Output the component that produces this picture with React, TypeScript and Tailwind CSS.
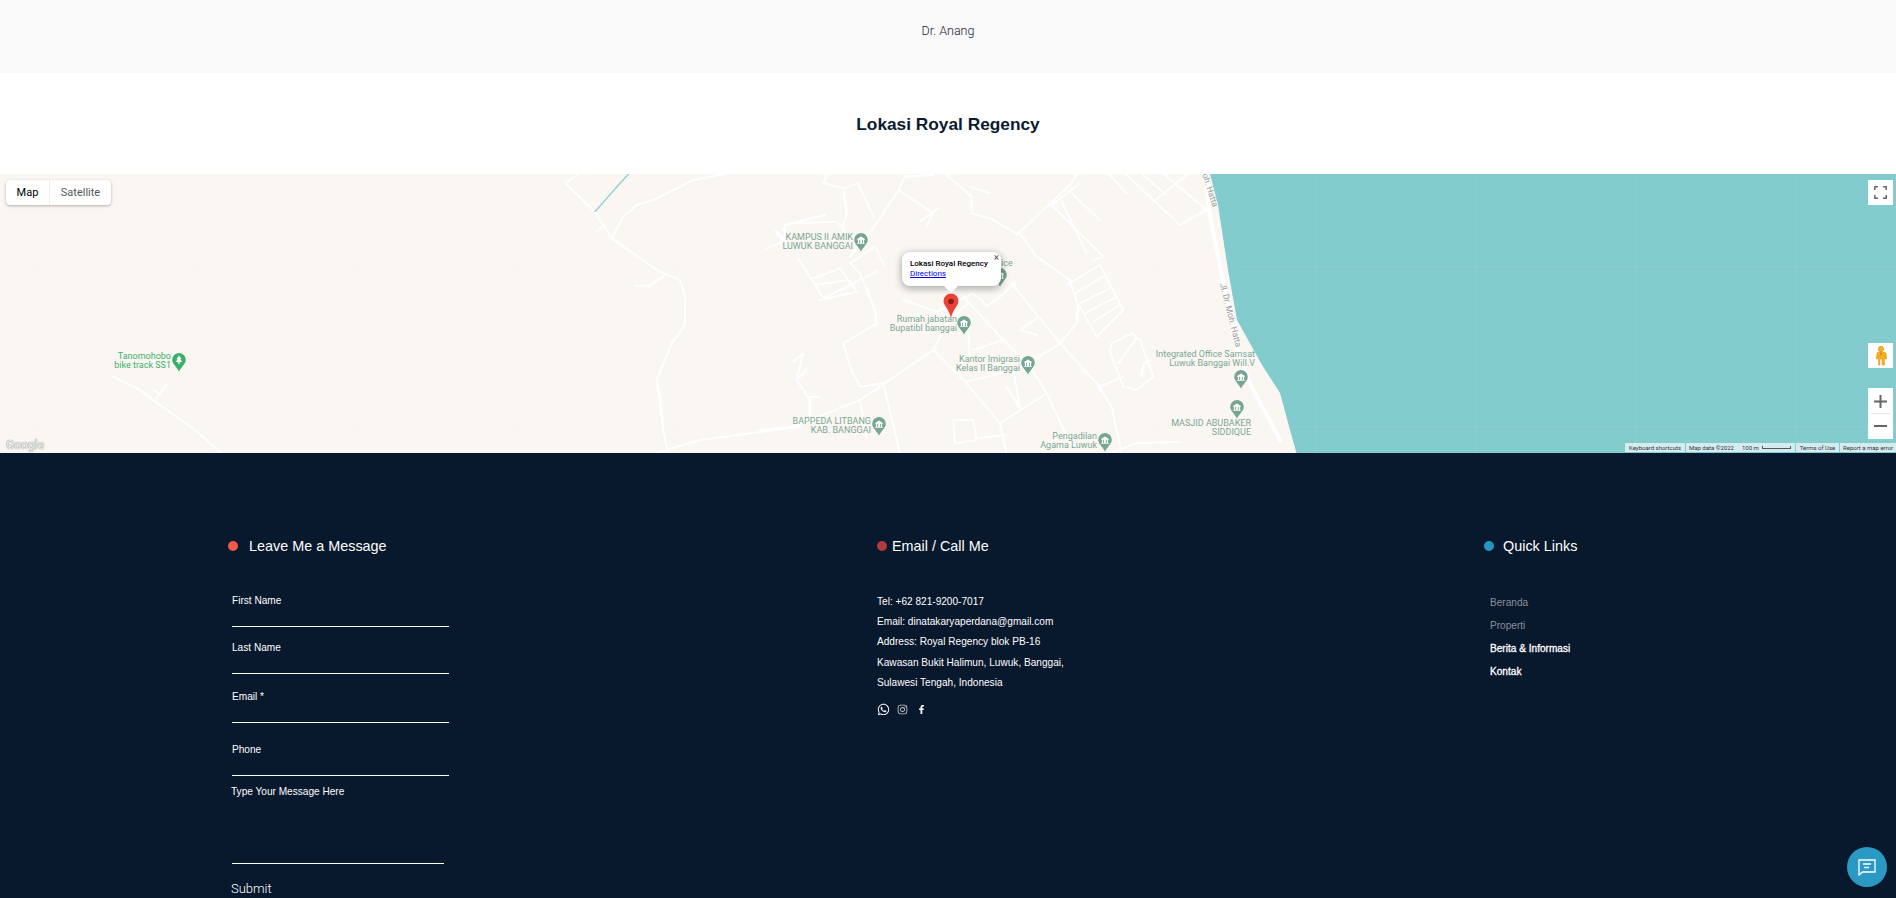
import React from 'react';
import { FaWhatsapp, FaInstagram, FaFacebookF } from 'react-icons/fa';

// road traces, in 3x crop coordinates of the map
const ROADS_MID: string[] = [
  'M200 15L190 40L250 55L295 40L340 140',
  'M250 55L260 130L250 165',
  'M70 180L75 165L195 135',
  'M75 165L100 160L230 155L250 175L255 190',
  'M20 235L80 212L45 185',
  'M115 265L190 385L350 305',
  'M160 325L240 295L290 365L180 390',
  'M165 345L265 330',
  'M270 280L345 230L375 290',
  'M270 280L300 310L345 420L350 460L300 490L250 520L270 590L300 650L370 640',
  'M520 15L435 20L415 60L350 160L270 260',
  'M415 60L520 130L500 170',
  'M480 155L535 115',
  'M560 15L635 80L635 130L690 145L770 190',
  'M630 50L690 70',
  'M770 195L930 45L950 15',
  'M780 190L830 260L930 330L955 410L950 460L900 520L830 565',
  'M755 340L900 520L1010 640L1055 710L1085 850',
  'M430 390L530 425L640 370L655 385',
  'M610 380L730 510L810 590L860 670L935 830',
  'M520 540L620 640L720 760L740 850',
  'M520 540L550 480L590 430L630 395',
  'M520 540L330 670L300 690L100 770L0 780',
  'M370 640L420 850',
  'M300 690L320 800',
  'M620 635L760 600L780 715',
  'M720 760L860 670',
  'M740 650L780 715',
  'M625 490L630 570',
  'M640 540L730 510',
  'M660 385L680 410L720 380L765 340',
  'M780 480L830 445',
  'M780 480L830 495',
  'M880 110L1030 260L1000 270',
  'M905 95L980 250',
  'M935 70L1020 150',
  'M875 105L960 40',
  'M1050 15L1100 70',
  'M1100 15L1260 165L1340 120L1210 10',
  'M1180 95L1280 15',
  'M1220 75L1150 15',
  'M920 345L1020 285L1090 420L1010 500L960 410',
  'M945 370L1030 320',
  'M960 400L1050 355',
  'M975 430L1070 380',
  'M1000 455L1080 405',
  'M1055 520L1115 490L1140 510L1180 620L1130 660L1090 650L1050 545L1055 520',
  'M1075 580L1130 505',
  'M1020 650L1090 620',
  'M1145 620L1150 580L1170 570',
  'M580 750L640 750L650 810L585 820L580 750',
  'M650 805L735 795',
  'M1050 850L1130 820L1260 815',
  'M100 575L130 550L110 630L150 690L150 740',
  'M110 630L140 600',
  'M150 680L180 680',
];

const ROADS_LEFT: string[] = [
  'M110 15L75 40L160 120L215 205L350 300L420 330L435 380L435 465L395 520L350 630L360 690L370 780L385 855',
  'M215 205L250 140L290 105L340 90L460 30L550 13',
  'M170 185L195 165',
  'M285 347L330 347L375 315',
  'M330 855L480 810L780 770',
  'M680 235L730 215L710 185',
  'M735 205L735 165L780 155',
];

const ROADS_FAR_LEFT: string[] = [
  'M340 140L420 180L480 225L580 295L670 375',
  'M465 210L500 165',
  'M460 180L480 192',
];

const TILE_X = [36, 196, 356, 516, 676, 836, 996, 1156, 1316, 1476, 1636, 1796];

interface Place {
  lines: string[];
  right: number;
  top: number;
  pinX: number;
  pinY: number;
  green?: boolean;
}

// coordinates relative to the map's top left corner
const PLACES: Place[] = [
  { lines: ['KAMPUS II AMIK', 'LUWUK BANGGAI'], right: 853, top: 59, pinX: 861, pinY: 66 },
  { lines: ['Rumah jabatan', 'Bupatibl banggai'], right: 957, top: 141, pinX: 964, pinY: 149 },
  { lines: ['Kantor Imigrasi', 'Kelas II Banggai'], right: 1020, top: 181, pinX: 1028, pinY: 189 },
  { lines: ['BAPPEDA LITBANG', 'KAB. BANGGAI'], right: 871, top: 243, pinX: 879, pinY: 250 },
  { lines: ['Pengadilan', 'Agama Luwuk'], right: 1097, top: 258, pinX: 1105, pinY: 266 },
  { lines: ['Integrated Office Samsat', 'Luwuk Banggai Will.V'], right: 1255, top: 176, pinX: 1241, pinY: 203 },
  { lines: ['MASJID ABUBAKER', 'SIDDIQUE'], right: 1251, top: 245, pinX: 1237, pinY: 233 },
  { lines: ['Tanomohobo', 'bike track SS1'], right: 171, top: 178, pinX: 179, pinY: 186, green: true },
];

const Dot = ({ className }: { className: string }) => (
  <span className={`w-[10px] h-[10px] rounded-full shrink-0 ${className}`} />
);

const Field = ({ label, className }: { label: string; className: string }) => (
  <label className={`block ${className}`}>
    <span className="block text-[10.100px] leading-[14px] text-white">{label}</span>
    <input className="block w-[217px] h-[19px] bg-transparent border-b border-white outline-none" />
  </label>
);

const PoiPin = ({ x, y, green }: { x: number; y: number; green?: boolean }) => (
  <svg className="absolute" style={{ left: x - 7, top: y - 7 }} width="14" height="19" viewBox="0 0 14 19">
    <path d="M7 0a6.8 6.8 0 0 0-6.8 6.8c0 4 3.9 6.400 6.800 11.700 2.900-5.300 6.800-7.700 6.800-11.700A6.800 6.800 0 0 0 7 0z" fill={green ? '#3ab06a' : '#76a592'} />
    {green ? (
      <path d="M7 2.500l2.500 3.500h-1.200l1.800 3h-2.400v2h-1.400v-2h-2.400l1.800-3h-1.200z" fill="#fff" />
    ) : (
      <path d="M3.200 6L7 3.500 10.800 6v.7h-.7v3.200h.7v.8H3.200v-.8h.7V6.700h-.7zM5.200 6.700v3.200h.9V6.700zM7.900 6.700v3.200h.9V6.700z" fill="#fff" />
    )}
  </svg>
);

const MapView = () => (
  <div className="relative h-[281px] overflow-hidden bg-[#faf7f3] font-['Roboto',sans-serif]">
    <svg className="absolute inset-0 blur-[0.4px]" width="1896" height="281" viewBox="0 174 1896 281">
      {TILE_X.map((x) => (
        <line key={x} x1={x} y1="174" x2={x} y2="455" stroke="#000" strokeOpacity="0.012" />
      ))}
      <line x1="0" y1="267" x2="1896" y2="267" stroke="#000" strokeOpacity="0.012" />
      <line x1="0" y1="427" x2="1896" y2="427" stroke="#000" strokeOpacity="0.012" />
      <path d="M1210 174L1218 205L1228 270L1237 320L1262 365L1280 393L1290 430L1297 455H1896V174Z" fill="#82cccd" />
      {TILE_X.filter((x) => x >= 1316).map((x) => (
        <line key={x} x1={x} y1="174" x2={x} y2="455" stroke="#fff" strokeOpacity="0.07" />
      ))}
      <line x1="1240" y1="267" x2="1896" y2="267" stroke="#fff" strokeOpacity="0.07" />
      <line x1="1290" y1="427" x2="1896" y2="427" stroke="#fff" strokeOpacity="0.07" />
      <g transform="translate(760 170) scale(0.3333)" fill="none" stroke="#fff" strokeWidth="6" strokeLinejoin="round" strokeLinecap="round">
        {ROADS_MID.map((d) => (
          <path key={d} d={d} />
        ))}
        <path d="M1340 0L1345 110L1390 340L1430 530L1470 640L1560 810" strokeWidth="12" />
      </g>
      <g transform="translate(540 170) scale(0.3333)" fill="none" stroke="#fff" strokeWidth="6" strokeLinejoin="round" strokeLinecap="round">
        {ROADS_LEFT.map((d) => (
          <path key={d} d={d} />
        ))}
        <path d="M165 125L240 40L265 13" stroke="#82cccd" strokeWidth="4" />
      </g>
      <g transform="translate(0 330) scale(0.3333)" fill="none" stroke="#fff" strokeWidth="6" strokeLinejoin="round" strokeLinecap="round">
        {ROADS_FAR_LEFT.map((d) => (
          <path key={d} d={d} />
        ))}
      </g>
    </svg>

    <span className="absolute left-[1193px] top-[11px] rotate-[72deg] text-[8.500px] leading-[10px] text-[#9a9a9a] whitespace-nowrap">oh. Hatta</span>
    <span className="absolute left-[1198px] top-[136px] rotate-[76deg] text-[8.500px] leading-[10px] text-[#9a9a9a] whitespace-nowrap">Jl. Dr. Moh. Hatta</span>

    {PLACES.map((p) => (
      <React.Fragment key={p.lines[0]}>
        <div
          className={`absolute text-[9px] leading-[9px] whitespace-nowrap text-right ${p.green ? 'text-[#3ab06a]' : 'text-[#7ba594]'}`}
          style={{ right: 1896 - p.right, top: p.top }}
        >
          {p.lines.map((l) => (
            <div key={l}>{l}</div>
          ))}
        </div>
        <PoiPin x={p.pinX} y={p.pinY} green={p.green} />
      </React.Fragment>
    ))}
    <span className="absolute left-[1001px] top-[85px] text-[9px] leading-[9px] text-[#7ba594]">ice</span>
    <PoiPin x={1000} y={101} />

    {/* info window */}
    <div className="absolute left-[902px] top-[78px] w-[99px] h-[34px] bg-white rounded-lg shadow-[0_2px_7px_1px_rgba(0,0,0,0.3)] pl-2 pt-[7px] text-[8px] leading-[10px]">
      <div className="font-medium text-black whitespace-nowrap">Lokasi Royal Regency</div>
      <a className="text-[#0000ee] underline">Directions</a>
      <span className="absolute right-[2px] top-[1px] text-[#555] text-[10px] leading-[10px]">×</span>
      <span className="absolute left-[42px] top-[34px] w-0 h-0 border-x-[7px] border-x-transparent border-t-[7px] border-t-white" />
    </div>
    <svg className="absolute left-[943px] top-[119px]" width="16" height="26" viewBox="0 0 16 26">
      <path d="M8 .500A7.500 7.500 0 0 0 .500 8c0 4.500 5.500 8 7.500 17 2-9 7.500-12.500 7.500-17A7.500 7.500 0 0 0 8 .500z" fill="#ea4335" />
      <circle cx="8" cy="8.500" r="2.800" fill="#8e1a14" />
    </svg>

    {/* map type */}
    <div className="absolute left-[6px] top-[6px] h-[25px] flex bg-white rounded-sm shadow-[0_1px_3px_rgba(0,0,0,0.3)] text-[11px] leading-[25px]">
      <span className="w-[44px] text-center text-black border-r border-[#eee]">Map</span>
      <span className="w-[61px] text-center text-[#565656]">Satellite</span>
    </div>

    {/* controls */}
    <div className="absolute right-[3px] top-[6px] w-[25px] h-[25px] bg-white flex items-center justify-center">
      <svg width="13" height="13" viewBox="0 0 13 13" fill="none" stroke="#666" strokeWidth="1.500">
        <path d="M.800 4V.800H4M9 .800h3.200V4M12.200 9v3.200H9M4 12.200H.800V9" />
      </svg>
    </div>
    <div className="absolute right-[3px] top-[169px] w-[25px] h-[25px] bg-white flex items-center justify-center">
      <svg width="12" height="20" viewBox="0 0 12 20">
        <circle cx="6" cy="3" r="2.700" fill="#f5b21a" stroke="#c98a10" strokeWidth="0.500" />
        <path d="M3 6h6l2 1 .800 6h-1.500l-.800-3v9H7V13H5v6H3.500v-9l-.800 3H1.200L2 7z" fill="#f5b21a" stroke="#c98a10" strokeWidth="0.400" />
        <path d="M6 6l1 2-1 2-1-2z" fill="#e5742a" />
      </svg>
    </div>
    <div className="absolute right-[3px] top-[214px] w-[25px] h-[51px] bg-white flex flex-col items-center">
      <svg className="mt-[7px]" width="13" height="13" viewBox="0 0 13 13">
        <path d="M5.500 0h2v5.500H13v2H7.500V13h-2V7.500H0v-2h5.500z" fill="#666" />
      </svg>
      <span className="mt-[5px] w-[19px] h-px bg-[#e6e6e6]" />
      <svg className="mt-[11px]" width="13" height="2" viewBox="0 0 13 2">
        <rect width="13" height="2" fill="#666" />
      </svg>
    </div>

    {/* google mark */}
    <span className="absolute left-[6px] bottom-[1px] text-[12px] leading-[14px] font-medium text-[#e8e8e8] [text-shadow:0_0_1px_#666]">Google</span>

    {/* attribution */}
    <div className="absolute right-0 bottom-px h-[9px] flex gap-px text-[6px] leading-[9px] text-[#333] whitespace-nowrap">
      <span className="w-[60px] text-center bg-white/65">Keyboard shortcuts</span>
      <span className="w-[109px] pl-[3px] bg-white/65 flex items-center">
        Map data ©2022
        <span className="ml-[8px]">100 m</span>
        <span className="ml-[3px] w-[29px] h-[3px] border-x border-b border-[#555]" />
      </span>
      <span className="w-[43px] text-center bg-white/65">Terms of Use</span>
      <span className="w-[56px] pl-[3px] bg-white/65 overflow-hidden">Report a map error</span>
    </div>
  </div>
);

export default function App() {
  return (
    <div className="w-full h-[898px] overflow-hidden flex flex-col font-['Liberation_Sans',Arial,sans-serif]">
      {/* Doctor name bar */}
      <div className="h-[73px] bg-[#f9f9f9] flex items-center justify-center pb-[11px] shrink-0">
        <p className="text-[12.500px] font-light text-[#1a2433] font-['Roboto',sans-serif]">Dr. Anang</p>
      </div>

      {/* Map section */}
      <div className="h-[101px] bg-white flex items-center justify-center pt-[2px] shrink-0">
        <h2 className="text-[17.300px] font-bold text-[#0a1a2f]">Lokasi Royal Regency</h2>
      </div>
      <MapView />

      {/* Footer */}
      <footer className="flex-1 bg-[#08182d] text-white pt-[83px] pl-[228px] grid grid-cols-[649px_607px_1fr] content-start">
        <div>
          <div className="flex items-center gap-[11px] h-5">
            <Dot className="bg-[#f0584a]" />
            <h3 className="text-[14.400px] leading-5">Leave Me a Message</h3>
          </div>
          <form className="pl-[4px] mt-[38px]">
            <Field label="First Name" className="" />
            <Field label="Last Name" className="mt-[14px]" />
            <Field label="Email *" className="mt-[16px]" />
            <Field label="Phone" className="mt-[20px]" />
            <label className="block mt-[9px] -ml-px">
              <span className="block text-[10.100px] leading-[14px]">Type Your Message Here</span>
              <textarea className="block w-[212px] h-[65px] ml-px bg-transparent border-b border-white outline-none resize-none" />
            </label>
            <button type="button" className="block mt-4 -ml-px text-[13px] leading-[18px] font-light font-['Roboto',sans-serif]">Submit</button>
          </form>
        </div>

        <div>
          <div className="flex items-center gap-[5px] h-5">
            <Dot className="bg-[#b23a3a]" />
            <h3 className="text-[14.400px] leading-5">Email / Call Me</h3>
          </div>
          <div className="mt-[36px] text-[10.100px] leading-[20.200px]">
            <p>Tel: +62 821-9200-7017</p>
            <p>Email: dinatakaryaperdana@gmail.com</p>
            <p>Address: Royal Regency blok PB-16</p>
            <p>Kawasan Bukit Halimun, Luwuk, Banggai,</p>
            <p>Sulawesi Tengah, Indonesia</p>
          </div>
          <div className="flex items-center mt-[10px] h-3">
            <FaWhatsapp className="w-[13px] h-[13px]" />
            <FaInstagram className="w-[11px] h-[11px] ml-[7px] text-[#c5cad0]" />
            <FaFacebookF className="w-[9px] h-[9px] ml-[9px]" />
          </div>
        </div>

        <div>
          <div className="flex items-center gap-[9px] h-5">
            <Dot className="bg-[#2596c0]" />
            <h3 className="text-[14.400px] leading-5">Quick Links</h3>
          </div>
          <ul className="pl-[6px] mt-[35px] text-[10.100px] leading-[23px]">
            <li className="text-[#8b909a]">Beranda</li>
            <li className="text-[#8b909a]">Properti</li>
            <li className="[-webkit-text-stroke:0.3px_white]">Berita &amp; Informasi</li>
            <li className="[-webkit-text-stroke:0.3px_white]">Kontak</li>
          </ul>
        </div>
      </footer>

      {/* chat bubble */}
      <button type="button" className="fixed right-[9px] bottom-[11px] w-10 h-10 rounded-full bg-[#2a9ac5] flex items-center justify-center">
        <svg width="18" height="17" viewBox="0 0 18 17" fill="none" stroke="#fff">
          <path d="M1 1h16v12H4.500L1 16z" strokeWidth="1.300" />
          <path d="M5 5h8M6 8.500h5" strokeWidth="1.300" />
        </svg>
      </button>
    </div>
  );
}
